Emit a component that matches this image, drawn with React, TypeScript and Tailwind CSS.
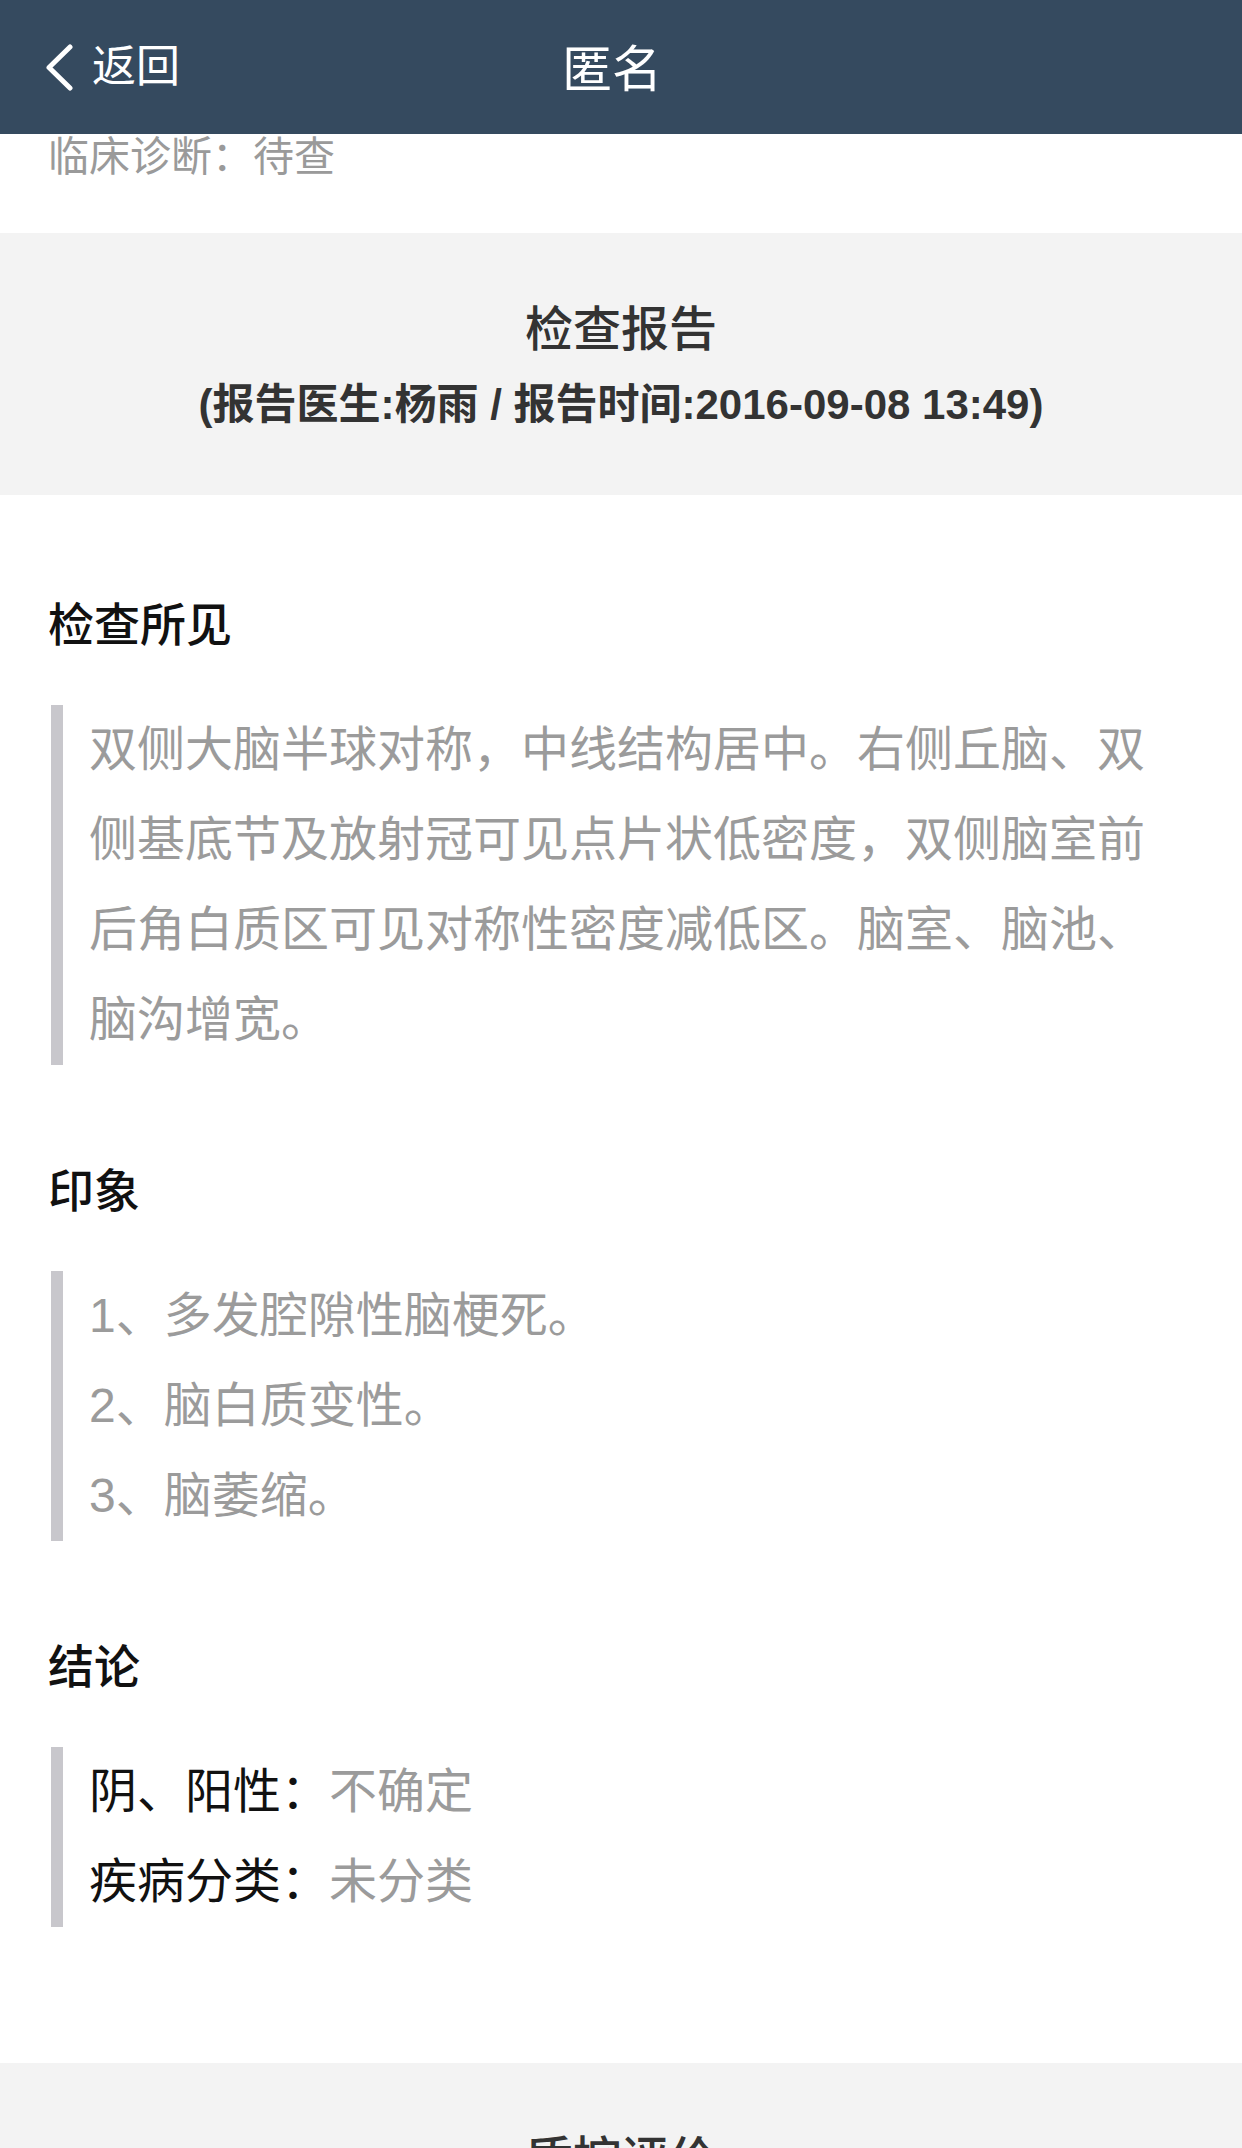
const FONT = "font-['Liberation_Sans','Noto_Sans_CJK_SC',sans-serif]";

function BackChevron() {
  return (
    <svg width="27" height="47" viewBox="0 0 27 47" fill="none">
      <polyline
        points="24,3 3,23.5 24,44"
        stroke="#ffffff"
        strokeWidth="5"
        strokeLinecap="round"
        strokeLinejoin="round"
      />
    </svg>
  );
}

function ReportBand({ title, sub }: { title: string; sub?: string }) {
  return (
    <div className="bg-[#f3f3f3] pt-[67px] pb-[65px] text-center text-[#333333]">
      <div className="text-[48px] leading-[60px] font-medium">{title}</div>
      {sub && <div className="mt-[20px] text-[42px] leading-[50px] font-bold">{sub}</div>}
    </div>
  );
}

function Section({ title, children }: { title: string; children: React.ReactNode }) {
  return (
    <section>
      <h2 className="text-[46px] leading-[60px] font-medium text-[#111111] mb-[50px]">{title}</h2>
      <div className="ml-[3px] mr-[40px] border-l-[12px] border-[#c8c7cc] pl-[26px] text-[48px] leading-[90px] text-[#9b9b9b]">
        {children}
      </div>
    </section>
  );
}

export default function App() {
  return (
    <div className={`${FONT} w-[1242px] min-h-[2148px] bg-white overflow-hidden`}>
      {/* nav bar */}
      <header className="h-[134px] bg-[#354a5f] grid grid-cols-[1fr_auto_1fr] items-center text-white">
        <div className="flex items-center gap-[19px] pl-[46px]">
          <BackChevron />
          <span className="text-[44px] leading-none">返回</span>
        </div>
        <div className="text-[50px] leading-none mr-[18px] mt-[6px]">匿名</div>
        <div />
      </header>

      {/* patient info tail */}
      <div className="px-[48px] pb-[53px]">
        <p className="text-[41px] leading-[46px] text-[#9a9a9a]">临床诊断：待查</p>
      </div>

      <ReportBand title="检查报告" sub="(报告医生:杨雨 / 报告时间:2016-09-08 13:49)" />

      <div className="px-[48px] pt-[100px] pb-[136px] flex flex-col gap-[96px]">
        <Section title="检查所见">
          <p>双侧大脑半球对称，中线结构居中。右侧丘脑、双侧基底节及放射冠可见点片状低密度，双侧脑室前后角白质区可见对称性密度减低区。脑室、脑池、脑沟增宽。</p>
        </Section>

        <Section title="印象">
          <p>1、多发腔隙性脑梗死。</p>
          <p>2、脑白质变性。</p>
          <p>3、脑萎缩。</p>
        </Section>

        <Section title="结论">
          <p>
            <span className="text-[#111111]">阴、阳性：</span>不确定
          </p>
          <p>
            <span className="text-[#111111]">疾病分类：</span>未分类
          </p>
        </Section>
      </div>

      <ReportBand title="质控评价" />
    </div>
  );
}
